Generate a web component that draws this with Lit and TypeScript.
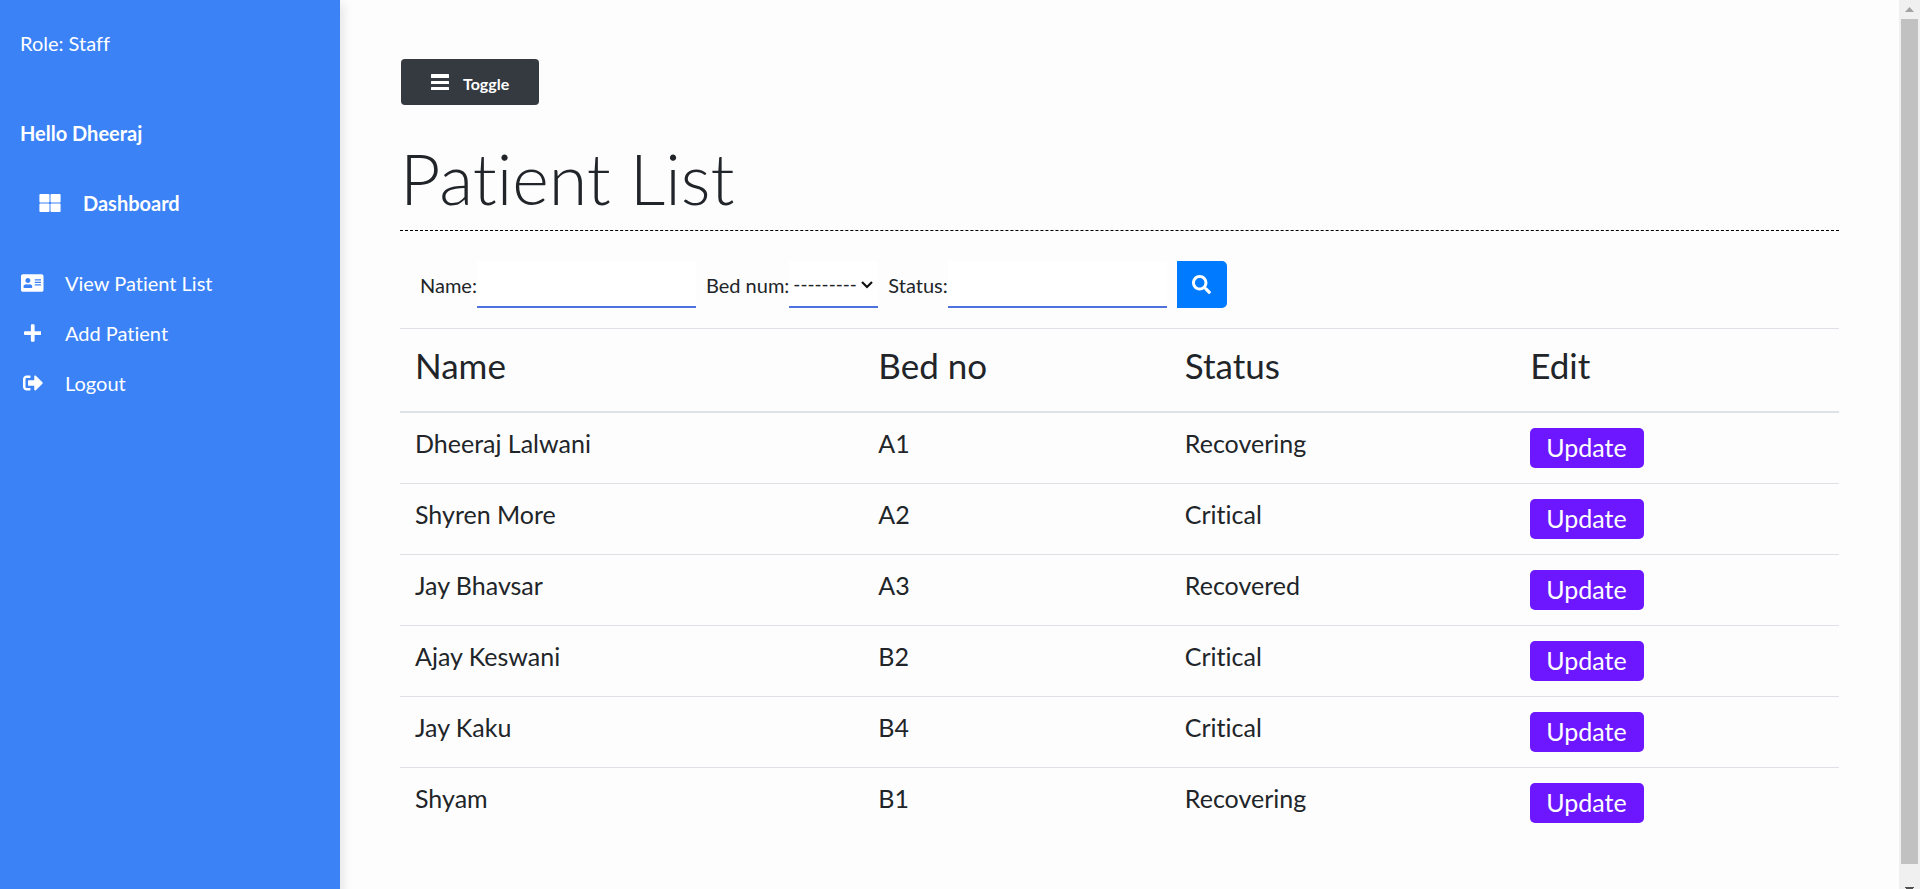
import { LitElement, html, css, svg } from "lit";
import { customElement, state } from "lit/decorators.js";

interface Patient {
  name: string;
  bed: string;
  status: string;
}

const PATIENTS: Patient[] = [
  { name: "Dheeraj Lalwani", bed: "A1", status: "Recovering" },
  { name: "Shyren More", bed: "A2", status: "Critical" },
  { name: "Jay Bhavsar", bed: "A3", status: "Recovered" },
  { name: "Ajay Keswani", bed: "B2", status: "Critical" },
  { name: "Jay Kaku", bed: "B4", status: "Critical" },
  { name: "Shyam", bed: "B1", status: "Recovering" },
];

const shapes = {
  card: svg`<path d="M528 32H48C21.5 32 0 53.5 0 80v352c0 26.5 21.5 48 48 48h480c26.5 0 48-21.5 48-48V80c0-26.5-21.5-48-48-48zm-352 96c35.3 0 64 28.7 64 64s-28.7 64-64 64-64-28.7-64-64 28.7-64 64-64zm112 236.8c0 10.6-10 19.2-22.4 19.2H86.4C74 384 64 375.4 64 364.8v-19.2c0-31.8 30.1-57.6 67.2-57.6h5c12.3 5.1 25.7 8 39.8 8s27.6-2.9 39.8-8h5c37.1 0 67.2 25.8 67.2 57.6v19.2zM512 312c0 4.4-3.6 8-8 8H360c-4.4 0-8-3.6-8-8v-16c0-4.4 3.6-8 8-8h144c4.4 0 8 3.6 8 8v16zm0-64c0 4.4-3.6 8-8 8H360c-4.4 0-8-3.6-8-8v-16c0-4.4 3.6-8 8-8h144c4.4 0 8 3.6 8 8v16zm0-64c0 4.4-3.6 8-8 8H360c-4.4 0-8-3.6-8-8v-16c0-4.4 3.6-8 8-8h144c4.4 0 8 3.6 8 8v16z"/>`,
  plus: svg`<path d="M416 208H272V64c0-17.67-14.33-32-32-32h-32c-17.67 0-32 14.33-32 32v144H32c-17.67 0-32 14.33-32 32v32c0 17.67 14.33 32 32 32h144v144c0 17.67 14.33 32 32 32h32c17.67 0 32-14.33 32-32V304h144c17.67 0 32-14.33 32-32v-32c0-17.67-14.33-32-32-32z"/>`,
  exit: svg`<path d="M497 273L329 441c-15 15-41 4.5-41-17v-96H152c-13.3 0-24-10.7-24-24v-96c0-13.3 10.7-24 24-24h136V88c0-21.4 25.9-32 41-17l168 168c9.3 9.4 9.3 24.6 0 34zM192 436v-40c0-6.6-5.4-12-12-12H96c-17.7 0-32-14.3-32-32V160c0-17.7 14.3-32 32-32h84c6.6 0 12-5.4 12-12V76c0-6.6-5.4-12-12-12H96c-53 0-96 43-96 96v192c0 53 43 96 96 96h84c6.6 0 12-5.4 12-12z"/>`,
  search: svg`<path d="M505 442.7L405.3 343c-4.5-4.5-10.6-7-17-7H372c27.6-35.3 44-79.7 44-128C416 93.1 322.9 0 208 0S0 93.1 0 208s93.1 208 208 208c48.3 0 92.7-16.4 128-44v16.3c0 6.4 2.5 12.5 7 17l99.7 99.7c9.4 9.4 24.6 9.4 33.9 0l28.3-28.3c9.4-9.4 9.4-24.6.1-34zM208 336c-70.7 0-128-57.2-128-128 0-70.7 57.2-128 128-128 70.7 0 128 57.2 128 128 0 70.7-57.2 128-128 128z"/>`,
};

const icon = (shape: unknown, width: number) =>
  html`<svg class="icon" viewBox="0 0 ${width} 512" aria-hidden="true">${shape}</svg>`;

@customElement("app-root")
export class AppRoot extends LitElement {
  @state() private collapsed = false;

  static styles = css`
    :host {
      display: flex;
      min-height: 100vh;
      background: #fdfdfd;
      color: #212529;
      font: 400 20px/30px Lato, "Liberation Sans", sans-serif;
      font-variant-ligatures: none;
    }
    * {
      box-sizing: border-box;
    }
    .icon {
      display: block;
      height: 20px;
      fill: currentColor;
    }

    .sidebar {
      flex: none;
      width: 340px;
      background: #3b82f6;
      color: #fff;
      box-shadow: 3px 3px 10px rgba(0, 0, 0, 0.1);
    }
    .sidebar.hidden {
      display: none;
    }
    .role {
      margin: 0;
      padding: 28px 20px 60px;
    }
    .hello {
      margin: 0;
      padding: 0 20px;
      font-size: 20px;
      font-weight: 700;
    }
    .dashboard {
      display: flex;
      align-items: center;
      gap: 20px;
      padding: 40px 38px 0;
      color: inherit;
      font-weight: 700;
      text-decoration: none;
    }
    .tiles {
      width: 25px;
    }
    .menu {
      list-style: none;
      margin: 40px 0 0;
      padding: 0;
    }
    .link {
      display: flex;
      align-items: center;
      gap: 20px;
      padding: 10px 20px;
      color: inherit;
      text-decoration: none;
    }
    .glyph {
      display: flex;
      justify-content: center;
      width: 25px;
    }

    .content {
      flex: 1;
      min-width: 0;
      padding: 59px 60px 60px;
    }
    .toggle {
      display: flex;
      align-items: center;
      gap: 14px;
      height: 46px;
      margin: 0 1px 31px;
      padding: 0 30px;
      border: 0;
      border-radius: 4px;
      background: #343a40;
      color: #fff;
      font: 700 16px/24px Lato, "Liberation Sans", sans-serif;
    }
    .toggle .icon {
      width: 18px;
    }
    .toggle-text {
      padding-top: 3px;
    }
    .title {
      margin: 0 0 30px;
      padding-bottom: 10px;
      border-bottom: 1px dashed #000;
      font-size: 70px;
      font-weight: 300;
      line-height: 84px;
    }

    .filters {
      display: flex;
      align-items: stretch;
      padding: 0 20px 20px;
    }
    .caption {
      align-self: center;
    }
    .field {
      height: 47px;
      border: 0;
      border-bottom: 2px solid #4e73df;
      border-radius: 0;
      background: #fff;
      color: inherit;
      font: inherit;
      outline: 0;
    }
    .text {
      width: 219px;
      margin-right: 10px;
    }
    .pick {
      position: relative;
      margin-right: 10px;
    }
    .select {
      width: 89px;
      padding: 0 20px 0 4px;
      font-size: 19px;
      appearance: none;
    }
    .chevron {
      position: absolute;
      right: 5px;
      top: 20px;
      width: 12px;
      height: 8px;
      fill: none;
      stroke: #111;
      stroke-width: 2.2;
      pointer-events: none;
    }
    .search {
      display: grid;
      place-items: center;
      width: 50px;
      padding: 0;
      border: 0;
      border-radius: 0 5px 5px 0;
      background: #007bff;
      color: #fff;
    }
    .search .icon {
      height: 19px;
    }

    .table {
      width: 100%;
      table-layout: fixed;
      border-collapse: separate;
      border-spacing: 0;
      font-size: 25px;
    }
    .c-name {
      width: 32.2%;
    }
    .c-bed {
      width: 21.3%;
    }
    .c-status {
      width: 24%;
    }
    .head {
      padding: 15px 15px 25px;
      border-top: 1px solid #dee2e6;
      border-bottom: 2px solid #dee2e6;
      font-size: 35px;
      font-weight: 400;
      line-height: 42px;
      text-align: left;
    }
    .cell {
      height: 71px;
      padding: 15px;
      border-bottom: 1px solid #dee2e6;
      line-height: 30px;
      vertical-align: top;
    }
    .row:last-child .cell {
      border-bottom: 0;
    }
    .update {
      display: block;
      height: 40px;
      padding: 0 17px 2px 16px;
      border: 0;
      border-radius: 5px;
      background: #6c17ff;
      color: #fff;
      font: inherit;
      line-height: 38px;
    }

    .scroll {
      flex: none;
      display: flex;
      flex-direction: column;
      align-items: center;
      width: 21px;
      height: 100vh;
      padding-top: 7px;
      background: #f0f0f0;
    }
    .arrow {
      flex: none;
      display: block;
      width: 9px;
      height: 5px;
    }
    .thumb {
      flex: 1;
      width: 17px;
      margin: 7px 0 23px;
      background: #c1c1c1;
    }
    .down {
      height: 2px;
    }
  `;

  render() {
    return html`
      <nav class="sidebar ${this.collapsed ? "hidden" : ""}">
        <p class="role">Role: Staff</p>
        <h2 class="hello">Hello Dheeraj</h2>
        <a class="dashboard" href="#">
          <svg class="icon tiles" viewBox="0 0 25 20" aria-hidden="true">
            <rect x="1.4" y="1" width="10.1" height="8.5" rx="1" />
            <rect x="12.5" y="1" width="10.1" height="8.5" rx="1" />
            <rect x="1.4" y="10.5" width="10.1" height="8.5" rx="1" />
            <rect x="12.5" y="10.5" width="10.1" height="8.5" rx="1" />
          </svg>
          Dashboard
        </a>
        <ul class="menu">
          <li><a class="link" href="#"><span class="glyph">${icon(shapes.card, 576)}</span>View Patient List</a></li>
          <li><a class="link" href="#"><span class="glyph">${icon(shapes.plus, 448)}</span>Add Patient</a></li>
          <li><a class="link" href="#"><span class="glyph">${icon(shapes.exit, 512)}</span>Logout</a></li>
        </ul>
      </nav>

      <main class="content">
        <button class="toggle" type="button" @click=${() => (this.collapsed = !this.collapsed)}>
          <svg class="icon" viewBox="0 0 18 20" aria-hidden="true">
            <rect y="2" width="18" height="4" rx="0.5" />
            <rect y="9" width="18" height="3" rx="0.5" />
            <rect y="15" width="18" height="3" rx="0.5" />
          </svg>
          <span class="toggle-text">Toggle</span>
        </button>
        <h1 class="title">Patient List</h1>

        <form class="filters" @submit=${(e: Event) => e.preventDefault()}>
          <label class="caption" for="name">Name:</label>
          <input class="field text" id="name" type="text" />
          <label class="caption" for="bed">Bed num:</label>
          <span class="pick">
            <select class="field select" id="bed">
              <option>---------</option>
              ${PATIENTS.map((p) => html`<option>${p.bed}</option>`)}
            </select>
            <svg class="chevron" viewBox="0 0 12 8" aria-hidden="true"><path d="M1 1l5 5 5-5" /></svg>
          </span>
          <label class="caption" for="status">Status:</label>
          <input class="field text" id="status" type="text" />
          <button class="search" type="submit" aria-label="Search">${icon(shapes.search, 512)}</button>
        </form>

        <table class="table">
          <thead>
            <tr>
              <th class="head c-name">Name</th>
              <th class="head c-bed">Bed no</th>
              <th class="head c-status">Status</th>
              <th class="head">Edit</th>
            </tr>
          </thead>
          <tbody>
            ${PATIENTS.map(
              (p) => html`<tr class="row">
                <td class="cell">${p.name}</td>
                <td class="cell">${p.bed}</td>
                <td class="cell">${p.status}</td>
                <td class="cell"><button class="update" type="button">Update</button></td>
              </tr>`
            )}
          </tbody>
        </table>
      </main>

      <div class="scroll" aria-hidden="true">
        <svg class="arrow" viewBox="0 0 9 5"><path d="M0 5L4.5 0L9 5z" fill="#a3a3a3" /></svg>
        <div class="thumb"></div>
        <svg class="arrow down" viewBox="0 0 9 2"><path d="M0 0H9V1H8V2H1V1H0z" fill="#505050" /></svg>
      </div>
    `;
  }
}
